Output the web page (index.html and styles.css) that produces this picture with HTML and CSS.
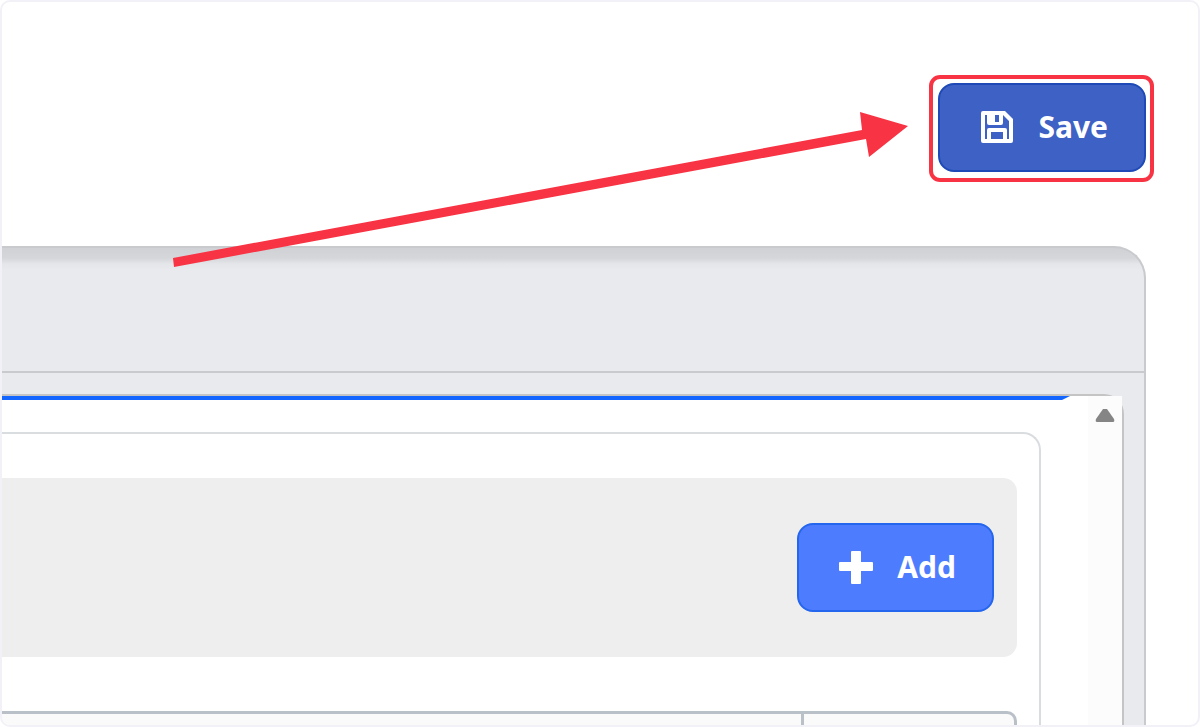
FILE: index.html
```html
<!DOCTYPE html>
<html lang="en">
<head>
<meta charset="utf-8">
<title>Editor</title>
<link rel="stylesheet" href="styles.css">
</head>
<body>
<main class="frame">
  <header class="toolbar">
    <div class="highlight">
      <button class="button button-save" type="button">
        <svg class="icon" viewBox="0 0 34 34" aria-hidden="true">
          <path fill="currentColor" fill-rule="evenodd" d="M3 1h22l8 8v22q0 2-2 2H3q-2 0-2-2V3q0-2 2-2zM5 5v24h2v-9q0-2 2-2h16q2 0 2 2v9h2V11l-6-6v8q0 2-2 2H9q-2 0-2-2V5zM15 5v7h4V5zM11 22v7h12v-7z"/>
        </svg>
        <span>Save</span>
      </button>
    </div>
  </header>
  <section class="panel">
    <div class="panel-head"></div>
    <div class="pane">
      <div class="pane-content">
        <div class="accent"></div>
        <div class="card">
          <div class="actions">
            <button class="button button-add" type="button">
              <svg class="icon" viewBox="0 0 34 34" aria-hidden="true">
                <path fill="currentColor" d="M13 1h8q1 0 1 1v10h11q1 0 1 1v7q0 1-1 1H22v12q0 1-1 1h-8q-1 0-1-1V21H1q-1 0-1-1v-7q0-1 1-1h11V2q0-1 1-1z"/>
              </svg>
              <span>Add</span>
            </button>
          </div>
          <div class="grid">
            <div class="grid-main"></div>
            <div class="grid-side"></div>
          </div>
        </div>
      </div>
      <div class="scrollbar">
        <svg class="scroll-up" viewBox="0 0 20 14" aria-hidden="true"><path fill="#858585" d="M8 1h4l7 10q1 3-1 3H2q-2 0-1-3z"/></svg>
      </div>
    </div>
  </section>
  <svg class="arrow" viewBox="0 0 736 156" aria-hidden="true">
    <path fill="#f83444" d="M1 147 690 19 688 1 736 15 697 46 694 28 2 156z"/>
  </svg>
</main>
</body>
</html>
```
FILE: styles.css
```css
* {
  box-sizing: border-box;
}

body {
  margin: 0;
  background: #fff;
  font-family: "Noto Sans", "Open Sans", sans-serif;
}

.frame {
  position: relative;
  display: flex;
  flex-direction: column;
  height: 100vh;
  border: 2px solid #f2f1f8;
  border-radius: 10px;
  overflow: hidden;
}

.toolbar {
  display: flex;
  justify-content: flex-end;
  padding: 73px 44px 64px 0;
}

.highlight {
  padding: 4px 4px 6px 5px;
  border: 4px solid #f83444;
  border-radius: 11px;
}

.button {
  display: flex;
  align-items: center;
  gap: 24px;
  height: 89px;
  padding: 0 36px 2px 40px;
  border: 2px solid;
  border-radius: 16px;
  color: #fff;
  font: 700 30px/40px "Noto Sans", "Open Sans", sans-serif;
}

.button-save {
  background: #3d61c4;
  border-color: #1e49b6;
}

.button-add {
  background: #4d7cff;
  border-color: #2466ee;
}

.icon {
  width: 34px;
  height: 34px;
}

.panel {
  display: flex;
  flex: 1;
  flex-direction: column;
  min-height: 0;
  margin-right: 52px;
  padding-right: 20px;
  border: 2px solid #c9cacd;
  border-width: 2px 2px 0 0;
  border-radius: 0 32px 0 0;
  background: #e9eaee linear-gradient(#d0d1d5, #d5d6da 10px, #e5e6ea 16px, #e9eaee 22px) no-repeat top / 100% 22px;
}

.panel-head {
  flex: none;
  height: 125px;
  margin-right: -20px;
  border-bottom: 2px solid #c9cacd;
}

.pane {
  display: flex;
  flex: 1;
  min-height: 0;
  margin-top: 21px;
  border: 2px solid #c4c4c4;
  border-width: 2px 2px 0 0;
  border-radius: 0 20px 0 0;
  background: #fff;
}

.pane-content {
  flex: 1;
  overflow: hidden;
}

.accent {
  height: 4px;
  margin-right: 18px;
  background: #1266ff;
  clip-path: polygon(0 0, 100% 0, calc(100% - 8px) 100%, 0 100%);
}

.card {
  height: 400px;
  margin: 32px 47px 0 0;
  padding: 44px 22px 0 0;
  border: 2px solid #dadde0;
  border-width: 2px 2px 0 0;
  border-radius: 0 18px 0 0;
}

.actions {
  display: flex;
  justify-content: flex-end;
  padding: 45px 23px 45px 0;
  border-radius: 0 14px 14px 0;
  background: #eee;
}

.grid {
  display: flex;
  height: 100px;
  margin-top: 54px;
  border: 3px solid #b9c0c7;
  border-width: 3px 3px 0 0;
  border-radius: 0 10px 0 0;
  background: #fafafa;
}

.grid-main {
  flex: 1;
  border-right: 3px solid #b9c0c7;
}

.grid-side {
  width: 210px;
}

.scrollbar {
  display: flex;
  justify-content: center;
  width: 34px;
  padding-top: 12px;
  background: #fcfcfc;
}

.scroll-up {
  width: 20px;
  height: 14px;
}

.arrow {
  position: absolute;
  top: 109px;
  left: 170px;
  width: 736px;
  height: 156px;
  pointer-events: none;
}
```
